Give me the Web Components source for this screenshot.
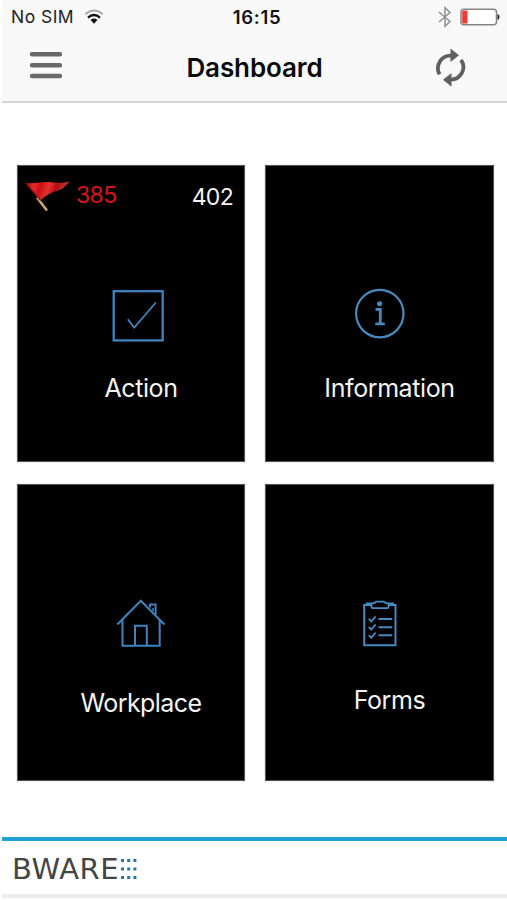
<!DOCTYPE html>
<html lang="en">
<head>
<meta charset="utf-8">
<title>Dashboard</title>
<style>
html,body{margin:0;height:100%;background:#fff}
body{font-family:Inter,"Liberation Sans",sans-serif;overflow:hidden}
</style>
</head>
<body>
<dash-app></dash-app>
<script>
const define = (name, html) => customElements.define(name, class extends HTMLElement {
  constructor() {
    super();
    this.attachShadow({mode: 'open'}).innerHTML = html;
  }
});

define('status-bar', `
<style>
:host{display:grid;grid-template-columns:1fr auto 1fr;align-items:center;height:34px;padding:0 7px 0 9px;font-size:17.5px;line-height:34px;color:#222}
.l,.r{display:flex;align-items:center}
.l{gap:10px;letter-spacing:.45px}
.r{justify-content:flex-end;gap:8px}
b{font-weight:600;color:#111;font-size:18.5px;letter-spacing:.7px;padding-left:3px}
svg{display:block;flex:none}
</style>
<div class="l"><span>No SIM</span>
<svg width="20" height="16" viewBox="0 0 20 16" fill="none"><path d="M1.2 5.2Q10-2.2 18.8 5.2" stroke="#aaa" stroke-width="2"/><path d="M4 8.6Q10 3.4 16 8.6" stroke="#111" stroke-width="2.3"/><path d="M6.6 11Q10 8.2 13.4 11L10 14.8Z" fill="#111"/></svg></div>
<b>16:15</b>
<div class="r">
<svg width="14" height="22" viewBox="0 0 14 22" fill="none" stroke="#929292" stroke-width="1.5"><path d="M1 6L12 15.5L7 20.3V1.7L12 6.5L1 16"/></svg>
<svg width="40" height="18" viewBox="0 0 40 18"><rect x="1" y="1.2" width="35.5" height="15.6" rx="3" fill="#fff" stroke="#858585" stroke-width="1.5"/><path d="M3.5 2.5H7.5V15.5H3.5Q2.2 15.5 2.2 14V4Q2.2 2.5 3.5 2.5Z" fill="#ee3b37"/><path d="M37.5 6Q39.5 6.5 39.5 9T37.5 12Z" fill="#222"/></svg></div>`);

define('nav-bar', `
<style>
:host{display:grid;grid-template-columns:1fr auto 1fr;align-items:center;height:67px;padding:0 40px 0 26px}
h1{margin:0;font-size:26px;font-weight:600;line-height:36px;color:#0a0a0a;letter-spacing:-.1px;padding-left:14px}
svg{display:block}
.menu{margin-top:-6px}
.sync{justify-self:end}
</style>
<svg class="menu" width="35" height="30" viewBox="0 0 35 30" stroke="#696969" stroke-width="4.4" stroke-linecap="round"><path d="M4 4.2H32M4 15.2H32M4 26H32"/></svg>
<h1><slot></slot></h1>
<svg class="sync" width="32" height="40" viewBox="0 0 32 40"><g fill="none" stroke="#606060" stroke-width="3.8"><path d="M4.6 26.4A12.6 12.6 0 0 1 16.5 7.6H18"/><path d="M26 11.8A12.6 12.6 0 0 1 15.5 31.7H14"/></g><path d="M15.5 .5L24 7.2L15.5 14Z M16.5 25L8 31.8L16.5 38.7Z" fill="#606060"/></svg>`);

define('action-icon', `
<style>:host,svg{display:block}</style>
<svg width="60" height="60" fill="none" stroke="#3d83bd"><rect x="5.7" y="6.2" width="49" height="49.2" stroke-width="2.3"/><path d="M19.8 34.3L26.3 42.5L47.8 17.5" stroke-width="1.8"/></svg>`);

define('info-icon', `
<style>:host,svg{display:block}</style>
<svg width="60" height="60" fill="none" stroke="#468bc0"><circle cx="29.8" cy="29.6" r="23.7" stroke-width="2.2"/><path d="M25.5 25.3H30.3V39.6M25.3 39.8H34.8" stroke-width="2.8"/><circle cx="29.6" cy="19.8" r="2.5" fill="#468bc0" stroke="none"/></svg>`);

define('home-icon', `
<style>:host,svg{display:block}</style>
<svg width="60" height="60" fill="none" stroke="#3d83bd" stroke-width="2"><path d="M6.3 30.5L29.8 6.7L53.4 30.5M11.5 26V51.8H48.7V26M24 51.5V31.8H35.8V51.5M39 13.5V10.6H44.6V20.8"/><path d="M42 14V17" stroke-width="1.5"/></svg>`);

define('forms-icon', `
<style>:host,svg{display:block}</style>
<svg width="60" height="60" fill="none" stroke="#468bc0" stroke-width="2"><path d="M21 11H14.2V51.3H45.5V11H38.7"/><path d="M21.5 9.5Q25 9.5 26 7.6H34Q35 9.5 38.5 9.5V12.5Q38.5 14.2 36.8 14.2H23.2Q21.5 14.2 21.5 12.5ZM15.8 9.3H21M39 9.3H44" stroke-width="1.8"/><path d="M28.5 25H42.2M28.5 33.3H42.2M28.5 41.3H42.2"/><path d="M18.8 24.7L21.2 27.5L25.6 22.3M18.8 32.8L21.2 35.6L25.6 30.4M18.8 41L21.2 43.8L25.6 38.6" stroke-width="1.8"/></svg>`);

define('flag-icon', `
<style>:host,svg{display:block}</style>
<svg width="46" height="32" viewBox="0 0 46 32"><defs><linearGradient id="g" x1="0" y1="0" x2="1" y2=".15"><stop offset="0" stop-color="#a80b0c"/><stop offset=".22" stop-color="#e8282b"/><stop offset=".36" stop-color="#c81216"/><stop offset=".55" stop-color="#e83030"/><stop offset=".72" stop-color="#b00d12"/><stop offset="1" stop-color="#c84540"/></linearGradient></defs>
<path d="M12 16.5L22 29.5" stroke="#c6a779" stroke-width="2.6"/><path d="M1 2C9 3 16 0 26 1.2S38 1.8 45 .5C40 4 39 7.8 34 9.2S23 12.5 15.6 19.2Z" fill="url(#g)"/><path d="M1 2L15.6 19.6" stroke="#8e1713" stroke-width="1.2"/></svg>`);

define('dash-tile', `
<style>
:host{display:flex;flex-direction:column;box-sizing:border-box;background:#000;color:#f4f4f4;border:1px solid #555;height:297px;box-shadow:0 0 1px #aaa}
.top{height:var(--top,118px);flex:none}
.icon{display:flex;justify-content:center;padding-left:var(--shift,0px);height:60px}
.label{padding-left:20px;margin-top:var(--gap,27px);text-align:center;font-size:25px;line-height:30px;letter-spacing:var(--ls,-.4px)}
</style>
<div class="top"><slot name="top"></slot></div>
<div class="icon"><slot name="icon"></slot></div>
<div class="label"><slot></slot></div>`);

define('tile-counts', `
<style>
:host{display:flex;align-items:flex-start;padding:14px 11px 0 7px;font-size:23px;line-height:30px}
.late{color:#dc1318;margin:0 0 0 5px;letter-spacing:-.6px}
.all{margin:2px 0 0 auto;letter-spacing:-.7px}
flag-icon{margin-top:1px}
</style>
<flag-icon></flag-icon><span class="late"><slot name="late"></slot></span><span class="all"><slot name="all"></slot></span>`);

define('brand-footer', `
<style>
:host{display:flex;align-items:center;box-sizing:border-box;height:61px;margin-left:2px;padding-left:10px;border-top:4px solid #239fda;border-bottom:4px solid #ececec;color:#454545;font:29px/36px "DejaVu Sans",sans-serif}
span{letter-spacing:.6px;padding-top:2px}
svg{display:block;margin:2px 0 0 1.5px}
</style>
<span><slot></slot></span>
<svg width="16" height="22" viewBox="0 0 16 22" stroke="#2875a8" stroke-width="3" stroke-dasharray="3 3.2"><path d="M0 2.5H16M0 11H16M0 19.5H16"/></svg>`);

define('dash-app', `
<style>
:host{display:flex;flex-direction:column;height:900px;width:507px;background:#fff}
header{background:#f9f9f9;border-bottom:2px solid #d5d5d5;margin-left:2px;height:101px}
main{display:grid;grid-template-columns:228px 229px;column-gap:20px;row-gap:22px;padding:62px 0 0 17px;flex:1;align-content:start}
</style>
<header><status-bar></status-bar><nav-bar>Dashboard</nav-bar></header>
<main>
<dash-tile style="--shift:14px;--top:119px;--gap:28px"><tile-counts slot="top"><span slot="late">385</span><span slot="all">402</span></tile-counts><action-icon slot="icon"></action-icon>Action</dash-tile>
<dash-tile style="--top:118px;--gap:29px"><info-icon slot="icon"></info-icon>Information</dash-tile>
<dash-tile style="--shift:20px;--top:109px;--gap:34px;--ls:-.55px"><home-icon slot="icon"></home-icon>Workplace</dash-tile>
<dash-tile style="--top:109px;--gap:31px"><forms-icon slot="icon"></forms-icon>Forms</dash-tile>
</main>
<brand-footer>BWARE</brand-footer>
<div style="height:2px"></div>`);
</script>
</body>
</html>
